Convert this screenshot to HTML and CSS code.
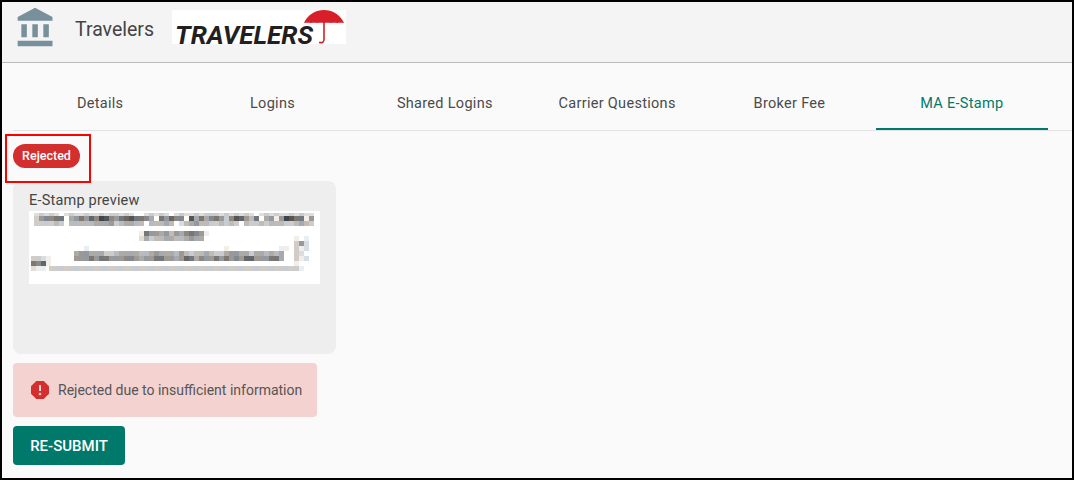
FILE: index.html
```html
<!DOCTYPE html>
<html lang="en">
<head>
    <meta charset="UTF-8">
    <title>Travelers - MA E-Stamp</title>
    <link rel="stylesheet" href="styles.css">
</head>
<body>
    <div class="frame">
        <div class="top-bar">
            <svg class="bank-icon" viewBox="0 0 24 24"><path d="M4 10v7h3v-7H4zm6 0v7h3v-7h-3zM2 22h19v-3H2v3zm14-12v7h3v-7h-3zm-4.5-9L2 6v2h19V6l-9.5-5z"/></svg>
            <span class="carrier-name">Travelers</span>
            <div class="logo">
                <span class="logo-text">TRAVELERS</span>
                <svg class="logo-umbrella" viewBox="0 0 42 35">
                    <path class="canopy" d="M0 13C4 4 12 0 20 0s16 4 20 13c-3-.5-5-.5-7 0-2-.5-4-.5-6 0-2-.5-5-.5-7 0-2-.5-5-.5-7 0-2-.5-4-.5-6 0-2-.5-4-.5-7 0z"/>
                    <path class="handle" d="M20 11v18c0 3.5-1.5 4-5 3.500"/>
                </svg>
            </div>
        </div>
        <div class="main">
            <div class="tabs">
                <div class="tab">Details</div>
                <div class="tab">Logins</div>
                <div class="tab">Shared Logins</div>
                <div class="tab">Carrier Questions</div>
                <div class="tab">Broker Fee</div>
                <div class="tab active">MA E-Stamp</div>
            </div>
            <div class="status"><span class="badge">Rejected</span></div>
            <div class="preview-card">
                <div class="preview-label">E-Stamp preview</div>
                <svg id="stamp" class="preview-image" width="291" height="73" viewBox="0 0 291 73"></svg>
            </div>
            <div class="alert">
                <svg class="alert-icon" viewBox="0 0 24 24"><path d="M15.73 3H8.27L3 8.27v7.46L8.27 21h7.46L21 15.73V8.27L15.73 3zM12 17.3c-.72 0-1.3-.58-1.3-1.3 0-.72.58-1.3 1.3-1.3.72 0 1.3.58 1.3 1.3 0 .72-.58 1.3-1.3 1.3zm1-4.3h-2V7h2v6z"/></svg>
                <span>Rejected due to insufficient information</span>
            </div>
            <button class="resubmit">RE-SUBMIT</button>
        </div>
    </div>
    <script src="mosaic.js"></script>
</body>
</html>
```

FILE: styles.css
```css
* {
    box-sizing: border-box;
}
body {
    margin: 0;
    font-family: Roboto, "Liberation Sans", sans-serif;
    color: #444;
}
.frame {
    height: 480px;
    border: 2px solid #000;
    background-color: #fafafa;
    overflow: hidden;
}
.top-bar {
    display: flex;
    align-items: center;
    height: 61px;
    background-color: #f4f4f4;
    border-bottom: 1px solid #bbb;
}
.bank-icon {
    width: 44px;
    height: 44px;
    margin: -8px 0 0 12px;
    fill: #78909c;
}
.carrier-name {
    margin: -6px 0 0 17px;
    font-size: 19.5px;
}
.logo {
    position: relative;
    width: 174px;
    height: 34px;
    margin: -11px 0 0 18px;
    background-color: #fff;
}
.logo-text {
    position: absolute;
    left: 3px;
    top: 10px;
    font-size: 26px;
    line-height: 30px;
    font-weight: bold;
    font-style: italic;
    color: #231f20;
}
.logo-umbrella {
    position: absolute;
    right: 0;
    top: 0;
    width: 42px;
    height: 35px;
}
.logo-umbrella .canopy {
    fill: #d81e28;
}
.logo-umbrella .handle {
    fill: none;
    stroke: #d81e28;
    stroke-width: 1.6;
}
.main {
    padding-left: 11px;
}
.tabs {
    display: flex;
    margin-top: 13px;
    padding: 0 24px 0 1px;
    border-bottom: 1px solid #e3e3e3;
}
.tab {
    flex: 1;
    height: 54px;
    text-align: center;
    line-height: 56px;
    font-size: 14.5px;
    letter-spacing: 0.3px;
    color: #4a4a4a;
}
.tab.active {
    color: #00796b;
    border-bottom: 2px solid #00796b;
}
.status {
    position: relative;
    display: flex;
    width: 67px;
    height: 24px;
    margin-top: 13px;
}
.status::after {
    content: '';
    position: absolute;
    box-sizing: border-box;
    left: -8px;
    top: -10px;
    width: 86px;
    height: 49px;
    border: 2px solid #f00;
}
.badge {
    width: 100%;
    text-align: center;
    line-height: 24px;
    font-size: 12.5px;
    font-weight: 500;
    color: #fff;
    background-color: #d32f2f;
    border-radius: 12px;
}
.preview-card {
    width: 323px;
    height: 173px;
    margin-top: 13px;
    padding: 10px 16px;
    background-color: #eee;
    border-radius: 8px;
}
.preview-label {
    height: 20px;
    line-height: 20px;
    font-size: 14.5px;
    letter-spacing: 0.2px;
}
.preview-image {
    display: block;
    background-color: #fff;
}
.alert {
    display: flex;
    align-items: center;
    gap: 6px;
    width: 304px;
    height: 54px;
    margin-top: 9px;
    padding-left: 15px;
    font-size: 14px;
    color: #555;
    background-color: #f4d2d0;
    border-radius: 4px;
}
.alert-icon {
    width: 24px;
    height: 24px;
    fill: #d32f2f;
}
.resubmit {
    display: block;
    width: 112px;
    height: 39px;
    margin-top: 9px;
    border: none;
    border-radius: 4px;
    font-family: inherit;
    font-size: 15px;
    font-weight: 500;
    color: #fff;
    background-color: #00796b;
}
```

FILE: mosaic.js
```js
// blurred stamp: each digit is the grey level of one 5px cell, . is blank
const rows = [
    { x: 5, y: 2, h: 3, cells: 'dcdcdfdcddcddcdccdcdffdcdcdfdcddcdcccdcdcdcdfdcdcddcdcdd' },
    { x: 5, y: 5, h: 5, cells: 'c98877fa979684589765778af79688f5a7a879c8569b7fa9e94577e9' },
    { x: 5, y: 10, h: 5, cells: 'ccccbcfbbbbbaaa9cbaabbfbbbabfdba9bbccbcbcfbccbcbbbccbabc' },
    { x: 110, y: 20, h: 5, cells: 'e799a9b9a8789e' },
    { x: 110, y: 25, h: 5, cells: 'dacbbaabba9aaf' },
    { x: 45, y: 35, h: 5, cells: '.fe...........................ef.........ee.ee' },
    { x: 45, y: 40, h: 5, cells: 'a99aaaccbaaaabba9aaab9bcbbabcca99aacaababa' },
    { x: 45, y: 45, h: 5, cells: '9997977999889a997799a967a8997979896699977a' },
    { x: 2, y: 45, h: 5, cells: 'ccde' },
    { x: 2, y: 50, h: 5, cells: '786e' },
    { x: 2, y: 55, h: 5, cells: 'deef' },
    { x: 20, y: 55, h: 5, cells: 'cccccccccccccccccccccccccccccccccccccccccccccccccce' },
    { x: 265, y: 25, h: 5, cells: 'efe' },
    { x: 265, y: 30, h: 5, cells: 'c9d' },
    { x: 265, y: 35, h: 5, cells: 'ced' },
    { x: 265, y: 40, h: 5, cells: 'cdf' },
    { x: 265, y: 45, h: 5, cells: 'ced' },
    { x: 265, y: 50, h: 5, cells: 'eff' }
];
const stamp = document.getElementById('stamp');
rows.forEach(function (row) {
    for (let i = 0; i < row.cells.length; i++) {
        if (row.cells[i] === '.') continue;
        const grey = parseInt(row.cells[i], 16) * 17;
        // slight colour noise, like a scaled down scan
        const tint = [6, 0, -6][i % 3];
        const rect = document.createElementNS('http://www.w3.org/2000/svg', 'rect');
        rect.setAttribute('x', row.x + i * 5);
        rect.setAttribute('y', row.y);
        rect.setAttribute('width', 5);
        rect.setAttribute('height', row.h);
        rect.setAttribute('fill', 'rgb(' + (grey + tint) + ',' + grey + ',' + (grey - tint) + ')');
        stamp.appendChild(rect);
    }
});
```
